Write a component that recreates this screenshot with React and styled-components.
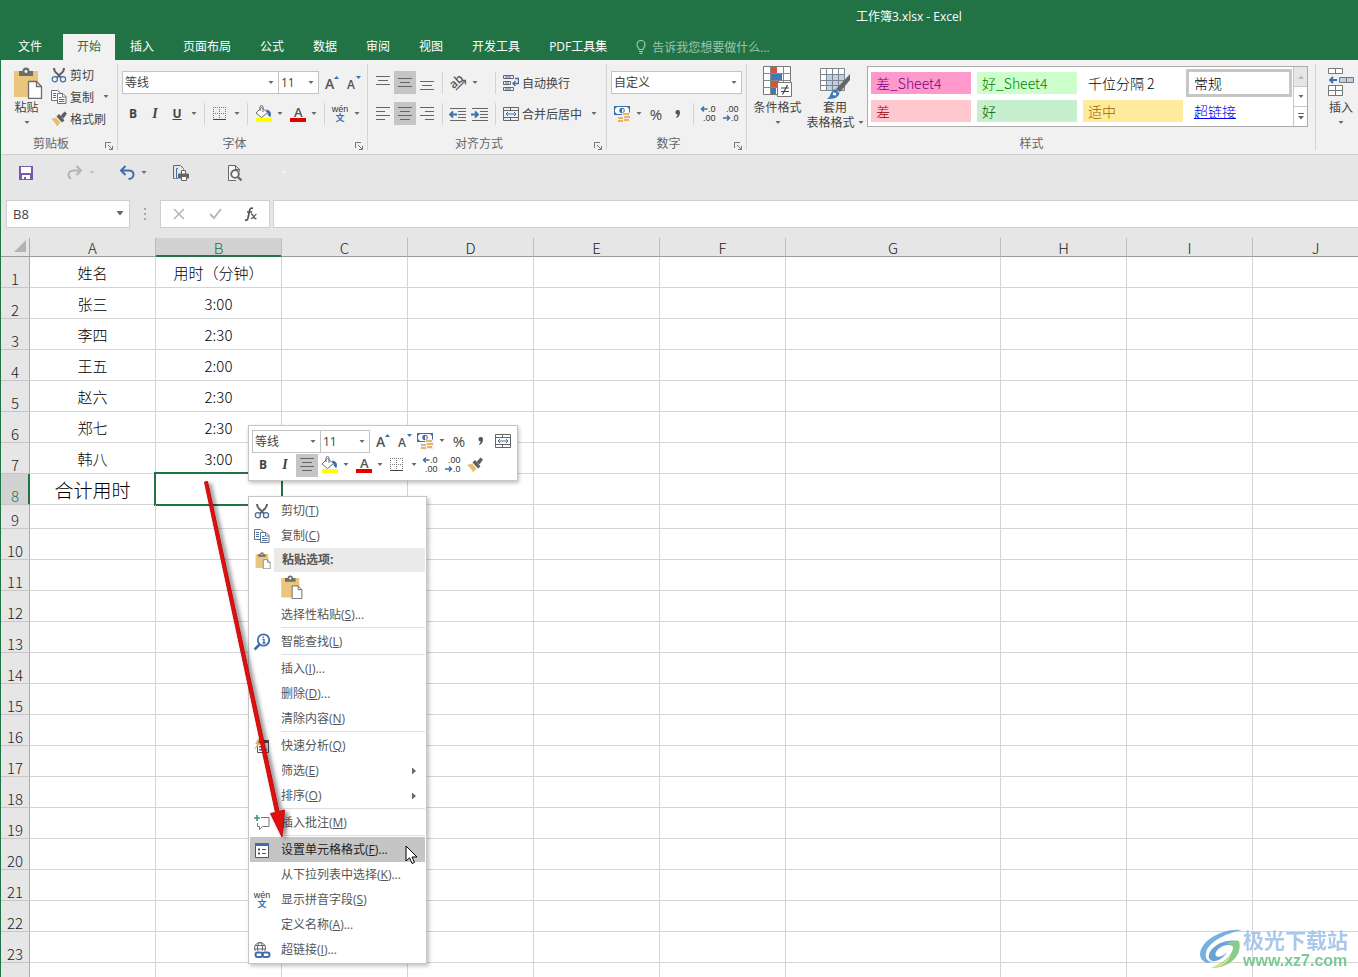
import React from "react";
import styled, { createGlobalStyle, css } from "styled-components";

const GlobalStyle = createGlobalStyle`
  *,
  *::before,
  *::after {
    box-sizing: border-box;
  }

  body {
    margin: 0;
    background: #fff;
    font-family: "Open Sans", "Noto Sans CJK SC", sans-serif;
    font-size: 12px;
    color: #444;
  }

  button,
  input,
  select {
    font: inherit;
    color: inherit;
    margin: 0;
    padding: 0;
    border: none;
    outline: none;
    background: none;
    border-radius: 0;
  }

  svg {
    display: block;
    flex: none;
  }
`;

const tabs = ["插入", "页面布局", "公式", "数据", "审阅", "视图", "开发工具", "PDF工具集"];

const cellStyles = [
  { name: "差_Sheet4", bg: "#ff99cc", color: "#800080" },
  { name: "好_Sheet4", bg: "#ccffcc", color: "#008000" },
  { name: "千位分隔 2", bg: "#ffffff", color: "#000000" },
  { name: "常规", bg: "#ffffff", color: "#000000", selected: true },
  { name: "差", bg: "#ffc7ce", color: "#9c0006" },
  { name: "好", bg: "#c6efce", color: "#006100" },
  { name: "适中", bg: "#ffeb9c", color: "#9c6500" },
  { name: "超链接", bg: "#ffffff", color: "#0000ff", link: true },
];

const columns = [
  { name: "A", width: 126 },
  { name: "B", width: 126 },
  { name: "C", width: 126 },
  { name: "D", width: 126 },
  { name: "E", width: 126 },
  { name: "F", width: 126 },
  { name: "G", width: 215 },
  { name: "H", width: 126 },
  { name: "I", width: 126 },
  { name: "J" },
];

const data = {
  1: ["姓名", "用时（分钟）"],
  2: ["张三", "3:00"],
  3: ["李四", "2:30"],
  4: ["王五", "2:00"],
  5: ["赵六", "2:30"],
  6: ["郑七", "2:30"],
  7: ["韩八", "3:00"],
  8: ["合计用时", ""],
};

const rows = Array.from({ length: 24 }, (_, i) => i + 1);

/* ---------- icons ---------- */

const Caret = ({ color = "#6a6a6a" }) => (
  <svg width="6" height="4" viewBox="0 0 6 4">
    <path d="M.500 0h5L3 3z" fill={color} />
  </svg>
);

const ClipboardIcon = ({ size = 32 }) => (
  <svg width={size} height={size} viewBox="0 0 32 32">
    <path d="M3 4h24v26H3z" fill="#ecc57c" />
    <path d="M8 4h3.500a3.500 3.500 0 0 1 7 0H22v5H8z" fill="#6d6d6d" />
    <circle cx="15" cy="4.500" r="1.400" fill="#fff" />
    <path d="M17.500 14.500h8l5 5v12h-13z" fill="#fff" stroke="#6d6d6d" strokeWidth="1.300" />
    <path d="M25.500 14.500v5h5" fill="none" stroke="#6d6d6d" strokeWidth="1.300" />
  </svg>
);

const CutIcon = () => (
  <svg width="16" height="16" viewBox="0 0 16 16">
    <path d="M3 1c0 3 1 4 3 5.500L10.500 11M13 1c0 3-1 4-3 5.500L5.500 11" fill="none" stroke="#5f5f5f" strokeWidth="2" />
    <circle cx="3.800" cy="12.300" r="2.600" fill="#f1f1f1" stroke="#3f6fa9" strokeWidth="1.200" />
    <circle cx="12" cy="12.300" r="2.600" fill="#f1f1f1" stroke="#3f6fa9" strokeWidth="1.200" />
  </svg>
);

const CopyIcon = () => (
  <svg width="16" height="16" viewBox="0 0 16 16" fill="#fff" stroke="#6a7380">
    <path d="M.5 1.500h6l2.500 2v8H.5z" />
    <path d="M2 4.500h3M2 6.500h3M2 8.500h3" stroke="#3f6fa9" />
    <path d="M6.500 4.500h5.500l3 3v7H6.500z" />
    <path d="M11.500 4.500v3.500h3.500" fill="none" />
    <path d="M8 8.500h2.500M8 10.500h5.500M8 12.500h5.500" stroke="#3f6fa9" />
  </svg>
);

const BrushIcon = () => (
  <svg width="16" height="16" viewBox="0 0 16 16">
    <path d="M0 8l5-1.500 4.500 5L6 15.500C4.500 12.500 3 10 0 8z" fill="#e8bd75" />
    <path d="M5.500 5.500L8 3l5.500 6.500-2.500 2z" fill="#5f5f5f" />
    <path d="M9.500 5L13.500.500 16 2.500l-3.500 5z" fill="#5f5f5f" />
  </svg>
);

const GrowIcon = ({ shrink }) => (
  <svg width="22" height="22" viewBox="0 0 22 22">
    <text x="6" y="17" fontSize={shrink ? 12 : 14} fontWeight="600" fill="#555">
      A
    </text>
    <path d={shrink ? "M15 4h5l-2.500 3z" : "M15 7h5l-2.500-3z"} fill="#3f6fa9" />
  </svg>
);

const BordersIcon = () => (
  <svg width="14" height="14" viewBox="0 0 14 14" fill="none" stroke="#777">
    <path
      d="M0 .5h13M0 6.500h13M.5 0v12M6.500 0v12M12.500 0v12"
      strokeDasharray="1 1"
    />
    <path d="M0 12.500h13" stroke="#444" />
  </svg>
);

const FillIcon = () => (
  <svg width="22" height="22" viewBox="0 0 22 22">
    <path d="M9.500 4.500l6 5-6 5-5.500-4.500z" fill="#fff" stroke="#6d6d6d" />
    <path d="M8 8V4a1.500 1.500 0 0 1 3 0v5" fill="none" stroke="#6d6d6d" />
    <path d="M14 6.500c4 .5 6 3 4.500 7.500-1.500-.5-3-2-3-4z" fill="#3f6fa9" />
    <path d="M4 15h16v4H4z" fill="#ffff00" />
  </svg>
);

const FontColorIcon = () => (
  <svg width="22" height="22" viewBox="0 0 22 22">
    <text x="8" y="14" fontSize="13" fontWeight="600" fill="#555">
      A
    </text>
    <path d="M4 15h16v4H4z" fill="#e30000" />
  </svg>
);

const PinyinIcon = () => (
  <svg width="22" height="22" viewBox="0 0 22 22">
    <text x="11" y="9" fontSize="9" fontFamily="Liberation Sans" textAnchor="middle" fill="#333">
      wén
    </text>
    <text x="11" y="18" fontSize="9" fontWeight="700" textAnchor="middle" fill="#3f6fa9">
      文
    </text>
  </svg>
);

const linePaths = {
  top: "M1 2.500h14M3 6.500h10M1 10.500h14",
  middle: "M1 4.500h14M3 8.500h10M1 12.500h14",
  bottom: "M1 7.500h14M3 11.500h10M1 15.500h14",
  left: "M1 2.500h14M1 6.500h9M1 10.500h14M1 14.500h9",
  center: "M1 2.500h14M3 6.500h10M1 10.500h14M3 14.500h10",
  right: "M1 2.500h14M6 6.500h9M1 10.500h14M6 14.500h9",
};

const LinesIcon = ({ kind }) => (
  <svg width="16" height="18" viewBox="0 0 16 18">
    <path d={linePaths[kind]} stroke="#666" />
  </svg>
);

const OrientationIcon = () => (
  <svg width="22" height="22" viewBox="0 0 22 22">
    <text x="3" y="14" fontSize="12" fontWeight="600" fill="#555" transform="rotate(-42 9 11)">
      ab
    </text>
    <path d="M9 18l9-9M14.500 8.500h4V12.500" fill="none" stroke="#666" strokeWidth="1.300" />
  </svg>
);

const IndentIcon = ({ increase }) => (
  <svg width="18" height="14" viewBox="0 0 18 14">
    <path d="M1 1.500h16M9 4.500h8M9 7.500h8M9 10.500h8M1 13.500h16" stroke="#666" />
    <path
      d={increase ? "M0 7.500h6M4 4.500l3 3-3 3" : "M8 7.500H2M4 4.500l-3 3 3 3"}
      fill="none"
      stroke="#3f6fa9"
      strokeWidth="1.800"
    />
  </svg>
);

const WrapIcon = () => (
  <svg width="16" height="16" viewBox="0 0 16 16" fill="none" stroke="#666">
    <path d="M.5.500h10v3H.5zM.5 6.500h7v3h-7zM.5 12.500h10v3H.5z" />
    <path d="M2 2h6M2 8h4M2 14h6" stroke="#3f6fa9" />
    <path d="M12 3.500h3.500v5H10M12.500 6L10 8.500l2.500 2.500" stroke="#3f6fa9" strokeWidth="1.400" />
  </svg>
);

const MergeIcon = () => (
  <svg width="16" height="16" viewBox="0 0 16 16" fill="none" stroke="#666">
    <path d="M.5 1.500h15v13H.5zM.5 4.500h15M.5 11.500h15M7.500 1.500v3M7.500 11.500v3" />
    <path d="M3 8h10M5 6L3 8l2 2M11 6l2 2-2 2" stroke="#3f6fa9" />
  </svg>
);

const MoneyIcon = () => (
  <svg width="18" height="18" viewBox="0 0 18 18">
    <path d="M1.500 1.500h15v8h-15z" fill="#fff" stroke="#3f6fa9" />
    <path d="M1 1h4l-4 4zM17 1h-4l4 4zM1 10h4L1 6z" fill="#3f6fa9" />
    <circle cx="9" cy="5.500" r="2.700" fill="#3f6fa9" />
    <path d="M9 4h1.500v3H9z" fill="#fff" />
    <path d="M9 7.500h9v10H4v-6h5z" fill="#f1f1f1" />
    <path d="M10 8h6v2h-6zM11 11h6v2h-6zM5 12h5v2H5zM5 15h5v2H5zM11 14h5v2h-5z" fill="#e8b468" />
  </svg>
);

const DecimalIcon = ({ decrease }) => (
  <svg width="22" height="22" viewBox="0 0 22 22" fontSize="9" fontFamily="Liberation Sans" fill="#333">
    <text x={decrease ? 6 : 10} y="9">
      {decrease ? ".00" : ".0"}
    </text>
    <text x={decrease ? 11 : 5} y="18">
      {decrease ? ".0" : ".00"}
    </text>
    <path
      d={decrease ? "M3 15h6M7 12.500L9.500 15 7 17.500" : "M9.500 6h-6M6 3.500L3.500 6 6 8.500"}
      fill="none"
      stroke="#3f6fa9"
      strokeWidth="1.500"
    />
  </svg>
);

const ConditionalIcon = () => (
  <svg width="30" height="34" viewBox="0 0 30 34">
    <path d="M.5.500h27v28H.5z" fill="#fff" stroke="#777" />
    <path d="M8 1h6v6H8zM8 14h8v7H8z" fill="#d2553a" />
    <path d="M8 7h11v7H8zM8 21h5v7H8z" fill="#3f7ab8" />
    <path d="M7.500.500v28M20.500.500v28M.5 7.500h27M.5 14.500h27M.5 21.500h27" stroke="#888" fill="none" />
    <path d="M14.500 16.500h14v14h-14z" fill="#fff" stroke="#777" />
    <path d="M18 22h8M18 25.500h8M24.500 19l-5 9.500" stroke="#444" strokeWidth="1.200" />
  </svg>
);

const TableFormatIcon = () => (
  <svg width="32" height="34" viewBox="0 0 32 34">
    <path d="M1.500 2.500h24v22h-24z" fill="#fff" />
    <path d="M8 9h18v16H8z" fill="#bcd0e6" />
    <path
      d="M1.500 2.500h24v22h-24zM1.500 8.500h24M1.500 14.500h24M1.500 19.500h24M7.500 2.500v22M13.500 2.500v22M19.500 2.500v22"
      fill="none"
      stroke="#7d848c"
    />
    <path d="M31 8v6L21 26l-4-3z" fill="#666" />
    <path d="M16 23l4.500 4c-1 5-6 6-12.500 6 4-2 3-8 8-10z" fill="#3f7ab8" />
    <path d="M14 27.500l3 1" stroke="#fff" strokeWidth="2.500" />
  </svg>
);

const InsertCellsIcon = () => (
  <svg width="26" height="32" viewBox="0 0 26 32" fill="#fff" stroke="#777">
    <path d="M.5 1.500h14v5H.5zM7.500 1.500v5" />
    <path d="M.5 18.500h14v10H.5zM7.500 18.500v10M.5 23.500h14" />
    <path d="M11.500 10.500h14v5h-14zM18.500 10.500v5" fill="#bcd0e6" />
    <path d="M9 13H2M5 10l-3 3 3 3" fill="none" stroke="#3f6fa9" strokeWidth="1.800" />
  </svg>
);

const LauncherIcon = () => (
  <svg width="8" height="8" viewBox="0 0 8 8" fill="none" stroke="#777">
    <path d="M.5 6V.5H6M3 3l4 4M7.500 4v3.500H4" />
  </svg>
);

const BulbIcon = () => (
  <svg width="10" height="14" viewBox="0 0 10 14" fill="none" stroke="#9dc5ad" strokeWidth="1.200">
    <path d="M3 9.500C3 8 1 7 1 4.500a4 4 0 0 1 8 0C9 7 7 8 7 9.500zM3 11.500h4M3.500 13.300h3" />
  </svg>
);

const SaveIcon = () => (
  <svg width="14" height="14" viewBox="0 0 14 14">
    <path d="M0 0h14v14H0z" fill="#7c58a8" />
    <path d="M2 1h10v6H2zM3 9h8v4H3z" fill="#fff" />
    <path d="M5 11h2v2H5z" fill="#7c58a8" />
  </svg>
);

const UndoIcon = ({ redo }) => (
  <svg width="16" height="16" viewBox="0 0 16 16">
    <path
      d={
        redo
          ? "M9.500 1l4.500 4.500L9.500 10M14 5.500H6.500C3 5.500 1.500 8 1.500 10s1 3 2.500 3.500"
          : "M6.500 1L2 5.500 6.500 10M2 5.500H9.500c3.500 0 5 2 5 4s-1.500 4.500-5 4.500"
      }
      fill="none"
      stroke={redo ? "#b4b4b4" : "#3f6fa9"}
      strokeWidth="2"
    />
  </svg>
);

const QuickPrintIcon = () => (
  <svg width="18" height="18" viewBox="0 0 18 18" fill="none" stroke="#666">
    <path d="M3.500 14.500h-2v-13h7l3 3v1" />
    <path d="M6 4.500H4.500v10H6" stroke="#3f6fa9" />
    <path d="M9.500 10V6.500h4V10" fill="#fff" />
    <path d="M6.500 10h10v4h-10z" fill="#666" />
    <path d="M9.500 12.500h5v4h-5z" fill="#fff" />
  </svg>
);

const PreviewIcon = () => (
  <svg width="16" height="18" viewBox="0 0 16 18" fill="none" stroke="#666">
    <path d="M9 16.500H1.500v-15h7l4 4v2M8.500 1.500v4h4" fill="#f7f7f7" />
    <circle cx="8" cy="10" r="3.800" fill="#f7f7f7" strokeWidth="1.800" />
    <path d="M11 13l3.500 3.500" strokeWidth="2.200" />
  </svg>
);

const LookupIcon = () => (
  <svg width="18" height="18" viewBox="0 0 18 18" fill="none" stroke="#3f6fa9">
    <circle cx="10.500" cy="7" r="5.700" strokeWidth="1.800" />
    <path d="M6.500 11.500L1.500 16.500" strokeWidth="2.600" />
    <path d="M9.500 6.500h1.500V10M9.500 10h3M10.300 3.500v1.500" strokeWidth="1.300" />
  </svg>
);

const QuickAnalysisIcon = () => (
  <svg width="16" height="16" viewBox="0 0 16 16">
    <path d="M3.500 3.500h11v11h-11z" fill="#fff" stroke="#555" />
    <path d="M3 2h12v3H3z" fill="#555" />
    <path d="M5 8h6v1.500H5zM5 11h8v1.500H5z" fill="#3f6fa9" />
    <path d="M5 0L1 6h2L0 12l7-7H4l3-5z" fill="#e8b468" />
  </svg>
);

const CommentIcon = () => (
  <svg width="16" height="16" viewBox="0 0 16 16" fill="none">
    <path d="M7 2.500h8v9H8.500L5.500 14.500v-3h-2V8" stroke="#777" />
    <path d="M3 0v6M0 3h6" stroke="#3f9a6b" strokeWidth="1.600" />
  </svg>
);

const FormatCellsIcon = () => (
  <svg width="16" height="16" viewBox="0 0 16 16">
    <path d="M1.500 1.500h13v14h-13z" fill="#fff" stroke="#555" />
    <path d="M1 1h14v3H1z" fill="#3f6fa9" />
    <path d="M8 7.500h4M8 11.500h4" stroke="#555" />
    <path d="M4 6.500h2v2H4zM4 10.500h2v2H4z" fill="#555" />
  </svg>
);

const LinkIcon = () => (
  <svg width="18" height="18" viewBox="0 0 18 18" fill="none">
    <circle cx="7" cy="7" r="5.500" stroke="#666" />
    <ellipse cx="7" cy="7" rx="2.500" ry="5.500" stroke="#666" />
    <path d="M2 4.500h10M1.500 8h11" stroke="#666" />
    <path d="M2 10h16v8H2z" fill="#fff" />
    <rect x="2.500" y="11.500" width="7" height="4.500" rx="2.200" stroke="#3f6fa9" strokeWidth="2" />
    <rect x="9.500" y="11.500" width="7" height="4.500" rx="2.200" stroke="#3f6fa9" strokeWidth="2" />
  </svg>
);

const CommaIcon = () => (
  <svg width="6" height="8" viewBox="0 0 6 8">
    <path d="M3 0a2 2 0 0 1 2 2c0 3-1 5-3.500 6L1 7c1-.5 1.500-1.500 1.500-2.500A2 2 0 0 1 3 0z" fill="#555" />
  </svg>
);

const FunctionIcon = () => (
  <svg width="14" height="14" viewBox="0 0 14 14" fill="none" stroke="#555">
    <path d="M9 1.500C7 .5 6 1.500 5.500 4L4 11c-.5 2-1.500 2.500-3 2M3 5h5" strokeWidth="1.700" />
    <path d="M7 7c1.500 0 2 1 2.500 2.500S11 12 12.500 11.500M12.500 7.500C11 7 9 12 7 11.500" strokeWidth="1.300" />
  </svg>
);

/* ---------- window ---------- */

const Window = styled.div`
  position: relative;
  display: flex;
  flex-direction: column;
  height: 100vh;
  overflow: hidden;
  border-left: 1px solid #217346;
  background: #e6e6e6;
`;

const TitleBar = styled.header`
  flex: none;
  height: 34px;
  padding-left: 63%;
  background: #217346;
  color: #fff;
  line-height: 34px;
`;

const TabBar = styled.nav`
  flex: none;
  display: flex;
  gap: 1px;
  height: 26px;
  background: #217346;
  color: #fff;
`;

const Tab = styled.button`
  flex: none;
  padding: 0 14px;
  line-height: 22px;
  white-space: nowrap;

  ${(p) =>
    p.$file &&
    css`
      width: 58px;
      margin-right: 3px;
    `}

  ${(p) =>
    p.$active &&
    css`
      background: #f1f1f1;
      color: #217346;
    `}
`;

const TellMe = styled.label`
  display: flex;
  align-items: center;
  gap: 6px;
  margin-left: 14px;

  input {
    width: 140px;
    color: #9dc5ad;
  }

  input::placeholder {
    color: #9dc5ad;
    opacity: 1;
  }
`;

/* ---------- ribbon ---------- */

const Ribbon = styled.div`
  flex: none;
  display: flex;
  height: 95px;
  overflow: hidden;
  background: #f1f1f1;
  border-bottom: 1px solid #d0d0d0;
`;

const Group = styled.section`
  position: relative;
  flex: none;
  display: flex;
  flex-direction: column;
  width: ${(p) => p.$width}px;

  &::after {
    content: "";
    position: absolute;
    top: 4px;
    right: 0;
    bottom: 4px;
    width: 1px;
    background: #d4d4d4;
  }
`;

const GroupBody = styled.div`
  flex: 1;
  display: flex;
  padding-left: 4px;
`;

const GroupFooter = styled.div`
  display: flex;
  align-items: center;
  height: 21px;
  color: #666;
  line-height: 18px;
  text-align: center;

  span {
    flex: 1;
  }

  button {
    width: 17px;
    padding: 5px 0 0 4px;
  }
`;

const Lines = styled.div`
  flex: 1;
  display: flex;
  flex-direction: column;
  gap: 8px;
  padding-top: 11px;
`;

const Line = styled.div`
  display: flex;
  align-items: center;
  height: ${(p) => p.$height || 23}px;
`;

const ToolButton = styled.button`
  flex: none;
  display: flex;
  align-items: center;
  justify-content: center;
  width: 22px;
  height: 23px;
  background: ${(p) => (p.$on ? "#c5c5c5" : "none")};
`;

const CaretButton = styled(ToolButton)`
  width: 12px;
`;

const Glyph = styled.span`
  font-size: ${(p) => p.$size || 12}px;
  font-weight: ${(p) => p.$weight || 700};
  font-family: ${(p) => (p.$serif ? '"Liberation Serif", serif' : "inherit")};
  font-style: ${(p) => (p.$italic ? "italic" : "normal")};
  text-decoration: ${(p) => (p.$underline ? "underline" : "none")};
  line-height: 18px;
  color: #444;
`;

const Separator = styled.i`
  flex: none;
  width: 1px;
  height: 22px;
  margin: 0 4px;
  background: #d4d4d4;
`;

const IndentCell = styled.div`
  display: flex;
  width: 44px;
`;

const TextButton = styled.button`
  display: flex;
  align-items: center;
  gap: 3px;
  height: 22px;
  padding: 0 6px 0 3px;
  white-space: nowrap;
`;

const SmallButtons = styled.div`
  padding-top: 4px;
`;

const BigButton = styled.button`
  flex: none;
  display: flex;
  flex-direction: column;
  align-items: center;
  width: ${(p) => p.$width}px;
  padding-top: 6px;
  line-height: 15px;
  white-space: nowrap;
`;

const BigIcon = styled.span`
  display: flex;
  align-items: center;
  height: 34px;
`;

const BigCaret = styled.span`
  display: flex;
  align-items: center;
  gap: 3px;
  height: 15px;
`;

const SelectBox = styled.div`
  position: relative;
  flex: none;
  width: ${(p) => p.$width}px;
  height: 23px;
  border: 1px solid #c3c3c3;
  background: #fff;

  & + & {
    margin-left: -1px;
  }

  select {
    appearance: none;
    width: 100%;
    height: 21px;
    padding-left: 2px;
  }

  svg {
    position: absolute;
    top: 9px;
    right: 4px;
    pointer-events: none;
  }
`;

const Gallery = styled.div`
  display: flex;
  width: 441px;
  height: 61px;
  margin: 6px 0 0 1px;
  border: 1px solid #ababab;
  background: #fff;
`;

const GalleryGrid = styled.div`
  flex: 1;
  display: grid;
  grid-template-columns: repeat(4, 1fr);
  grid-auto-rows: 22px;
  gap: 6px;
  padding: 5px 4px 0 3px;
`;

const StyleCell = styled.button`
  padding-left: 5px;
  font-family: "Noto Sans CJK SC", sans-serif;
  font-size: 14px;
  font-weight: 300;
  line-height: 20px;
  text-align: left;
  text-decoration: ${(p) => (p.$link ? "underline" : "none")};
  color: ${(p) => p.$color};
  background: ${(p) => p.$bg};
  outline: ${(p) => (p.$selected ? "3px solid #c6c6c6" : "none")};
`;

const GalleryScroll = styled.div`
  display: flex;
  flex-direction: column;
  width: 14px;
  border-left: 1px solid #c6c6c6;

  button {
    flex: 1;
    display: flex;
    flex-direction: column;
    gap: 2px;
    align-items: center;
    justify-content: center;
  }

  button + button {
    border-top: 1px solid #c6c6c6;
  }

  button:first-child {
    background: #e6e6e6;
  }
`;

/* ---------- quick access and formula bar ---------- */

const QuickAccess = styled.div`
  flex: none;
  display: flex;
  align-items: center;
  height: 35px;
  padding-left: 14px;
`;

const QuickItem = styled.div`
  display: flex;
  width: ${(p) => p.$width}px;
`;

const FormulaBar = styled.div`
  flex: none;
  display: flex;
  align-items: stretch;
  height: 28px;
  margin: 10px 0;
  padding-left: 5px;
`;

const NameBox = styled.label`
  position: relative;
  width: 124px;
  background: #fff;
  border: 1px solid #cfcfcf;

  input {
    width: 100px;
    height: 26px;
    padding-left: 6px;
    font-size: 13px;
  }

  svg {
    position: absolute;
    top: 10px;
    right: 5px;
  }
`;

const Dots = styled.span`
  display: flex;
  flex-direction: column;
  align-items: center;
  justify-content: center;
  gap: 3px;
  width: 30px;

  i {
    width: 2px;
    height: 2px;
    background: #aaa;
  }
`;

const FormulaButtons = styled.div`
  display: flex;
  width: 110px;
  margin-right: 3px;
  background: #fff;
  border: 1px solid #cfcfcf;

  button {
    flex: 1;
    display: flex;
    align-items: center;
    justify-content: center;
  }
`;

const FormulaInput = styled.input`
  && {
    flex: 1;
    background: #fff;
    border: 1px solid #cfcfcf;
    border-right: none;
  }
`;

/* ---------- sheet ---------- */

const SheetArea = styled.main`
  flex: 1;
  min-height: 0;
  overflow: hidden;
  background: #fff;
`;

const Sheet = styled.table`
  table-layout: fixed;
  width: 100%;
  min-width: 1378px;
  border-collapse: separate;
  border-spacing: 0;
  font-family: "Noto Sans CJK SC", sans-serif;
  font-size: 15px;
  font-weight: 300;
  color: #000;
`;

const ColHead = styled.th`
  height: 19px;
  padding: 2px 0 0;
  font-weight: 300;
  line-height: 16px;
  background: ${(p) => (p.$active ? "#d2d2d2" : "#e6e6e6")};
  color: ${(p) => (p.$active ? "#217346" : "#222")};
  border-right: 1px solid #bdbdbd;
  border-bottom: 1px solid ${(p) => (p.$active ? "#217346" : "#9b9b9b")};
  box-shadow: ${(p) => (p.$active ? "inset 0 -1px #217346" : "none")};
`;

const Corner = styled.td`
  padding: 0 3px 2px 0;
  background: #e6e6e6;
  border-right: 1px solid #ababab;
  border-bottom: 1px solid #9b9b9b;

  svg {
    margin-left: auto;
  }
`;

const RowHead = styled.th`
  padding: 0;
  font-weight: 300;
  line-height: 16px;
  vertical-align: bottom;
  background: ${(p) => (p.$active ? "#d2d2d2" : "#e6e6e6")};
  color: ${(p) => (p.$active ? "#217346" : "#222")};
  border-right: 1px solid ${(p) => (p.$active ? "#217346" : "#ababab")};
  border-bottom: 1px solid #c6c6c6;
  box-shadow: ${(p) => (p.$active ? "inset -1px 0 #217346" : "none")};
`;

const Row = styled.tr`
  height: ${(p) => p.$height}px;
`;

const Cell = styled.td`
  position: relative;
  padding: 2px 0 0;
  line-height: 20px;
  font-size: ${(p) => (p.$large ? 19 : 15)}px;
  text-align: center;
  white-space: nowrap;
  border-right: 1px solid #d4d4d4;
  border-bottom: 1px solid #d4d4d4;

  ${(p) =>
    p.$selected &&
    css`
      &::after {
        content: "";
        position: absolute;
        inset: -2px;
        border: 2px solid #217346;
      }
    `}
`;

/* ---------- floating parts ---------- */

const MiniToolbar = styled.div`
  position: absolute;
  top: 425px;
  left: 247px;
  width: 270px;
  height: 56px;
  padding: 3px;
  background: #fff;
  border: 1px solid #c6c6c6;
  box-shadow: 1px 2px 4px rgba(0, 0, 0, 0.25);
`;

const ContextMenu = styled.div`
  position: absolute;
  top: 496px;
  left: 247px;
  width: 179px;
  padding: 1px;
  background: #fff;
  border: 1px solid #c6c6c6;
  box-shadow: 2px 2px 4px rgba(0, 0, 0, 0.25);

  hr {
    height: 1px;
    margin: 0 0 1px 31px;
    border: none;
    background: #dadfe4;
  }
`;

const MenuItem = styled.button`
  display: flex;
  align-items: center;
  width: 100%;
  height: 25px;
  padding-right: 8px;
  color: ${(p) => (p.$active ? "#222" : "#555")};
  background: ${(p) => (p.$active ? "#c5c5c5" : "none")};
`;

const MenuIcon = styled.span`
  display: flex;
  justify-content: center;
  width: 24px;
`;

const MenuText = styled.span`
  flex: 1;
  padding: 0 0 2px 7px;
  text-align: left;
  white-space: nowrap;
`;

const MenuHeading = styled.div`
  display: flex;
  align-items: center;
  height: 24px;

  strong {
    flex: 1;
    padding-left: 8px;
    line-height: 24px;
    color: #555;
    background: #eaeaea;
  }
`;

const PasteChoice = styled.button`
  display: block;
  height: 30px;
  padding-left: 29px;
`;

const ArrowLayer = styled.svg`
  position: absolute;
  top: 470px;
  left: 189px;
  pointer-events: none;
  filter: drop-shadow(3px 2px 2px rgba(0, 0, 0, 0.5));
`;

const Pointer = styled.svg`
  position: absolute;
  top: 845px;
  left: 404px;
  pointer-events: none;
`;

const Watermark = styled.div`
  position: absolute;
  right: 10px;
  bottom: 6px;
  display: flex;
  align-items: center;
  opacity: 0.85;
  pointer-events: none;

  strong {
    display: block;
    font-family: "Noto Sans CJK SC", sans-serif;
    font-size: 21px;
    font-weight: 700;
    line-height: 24px;
    color: #9dbfe8;
  }

  span {
    display: block;
    font-family: "Liberation Sans", sans-serif;
    font-size: 16px;
    font-weight: 700;
    line-height: 20px;
    color: #63c384;
  }
`;

const menu = [
  { label: "剪切", hot: "T", icon: <CutIcon /> },
  { label: "复制", hot: "C", icon: <CopyIcon /> },
  { heading: "粘贴选项:" },
  { label: "选择性粘贴", hot: "S", more: true },
  { line: true },
  { label: "智能查找", hot: "L", icon: <LookupIcon /> },
  { line: true },
  { label: "插入", hot: "I", more: true },
  { label: "删除", hot: "D", more: true },
  { label: "清除内容", hot: "N" },
  { line: true },
  { label: "快速分析", hot: "Q", icon: <QuickAnalysisIcon /> },
  { label: "筛选", hot: "E", sub: true },
  { label: "排序", hot: "O", sub: true },
  { line: true },
  { label: "插入批注", hot: "M", icon: <CommentIcon /> },
  { line: true },
  { label: "设置单元格格式", hot: "F", more: true, icon: <FormatCellsIcon />, active: true },
  { label: "从下拉列表中选择", hot: "K", more: true },
  { label: "显示拼音字段", hot: "S", icon: <PinyinIcon /> },
  { label: "定义名称", hot: "A", more: true },
  { label: "超链接", hot: "I", more: true, icon: <LinkIcon /> },
];

function Select({ width, value, label }) {
  return (
    <SelectBox $width={width}>
      <select aria-label={label} defaultValue={value}>
        <option>{value}</option>
      </select>
      <Caret />
    </SelectBox>
  );
}

function Tool({ label, on, children }) {
  return (
    <ToolButton aria-label={label} $on={on}>
      {children}
    </ToolButton>
  );
}

function More({ label }) {
  return (
    <CaretButton aria-label={label}>
      <Caret />
    </CaretButton>
  );
}

function RibbonGroup({ title, width, launcher, children }) {
  return (
    <Group $width={width}>
      <GroupBody>{children}</GroupBody>
      <GroupFooter>
        <span>{title}</span>
        {launcher && (
          <button aria-label={title}>
            <LauncherIcon />
          </button>
        )}
      </GroupFooter>
    </Group>
  );
}

function ClipboardGroup() {
  return (
    <RibbonGroup title="剪贴板" width={117} launcher>
      <BigButton $width={43}>
        <BigIcon>
          <ClipboardIcon />
        </BigIcon>
        粘贴
        <BigCaret>
          <Caret />
        </BigCaret>
      </BigButton>
      <SmallButtons>
        <TextButton>
          <CutIcon />
          剪切
        </TextButton>
        <Line $height={22}>
          <TextButton>
            <CopyIcon />
            复制
          </TextButton>
          <More label="复制选项" />
        </Line>
        <TextButton>
          <BrushIcon />
          格式刷
        </TextButton>
      </SmallButtons>
    </RibbonGroup>
  );
}

function FontGroup() {
  return (
    <RibbonGroup title="字体" width={250} launcher>
      <Lines>
        <Line>
          <Select label="字体" width={157} value="等线" />
          <Select label="字号" width={41} value="11" />
          <Tool label="增大字号">
            <GrowIcon />
          </Tool>
          <Tool label="减小字号">
            <GrowIcon shrink />
          </Tool>
        </Line>
        <Line>
          <Tool label="加粗">
            <Glyph>B</Glyph>
          </Tool>
          <Tool label="倾斜">
            <Glyph $serif $italic $size={14}>I</Glyph>
          </Tool>
          <Tool label="下划线">
            <Glyph $underline>U</Glyph>
          </Tool>
          <More label="下划线选项" />
          <Separator />
          <Tool label="边框">
            <BordersIcon />
          </Tool>
          <More label="边框选项" />
          <Separator />
          <Tool label="填充颜色">
            <FillIcon />
          </Tool>
          <More label="填充颜色选项" />
          <Tool label="字体颜色">
            <FontColorIcon />
          </Tool>
          <More label="字体颜色选项" />
          <Separator />
          <Tool label="拼音">
            <PinyinIcon />
          </Tool>
          <More label="拼音选项" />
        </Line>
      </Lines>
    </RibbonGroup>
  );
}

function AlignGroup() {
  return (
    <RibbonGroup title="对齐方式" width={239} launcher>
      <Lines>
        <Line>
          <Tool label="顶端对齐">
            <LinesIcon kind="top" />
          </Tool>
          <Tool label="垂直居中" on>
            <LinesIcon kind="middle" />
          </Tool>
          <Tool label="底端对齐">
            <LinesIcon kind="bottom" />
          </Tool>
          <Separator />
          <IndentCell>
            <Tool label="方向">
              <OrientationIcon />
            </Tool>
            <More label="方向选项" />
          </IndentCell>
          <Separator />
          <TextButton>
            <WrapIcon />
            自动换行
          </TextButton>
        </Line>
        <Line>
          <Tool label="左对齐">
            <LinesIcon kind="left" />
          </Tool>
          <Tool label="居中" on>
            <LinesIcon kind="center" />
          </Tool>
          <Tool label="右对齐">
            <LinesIcon kind="right" />
          </Tool>
          <Separator />
          <IndentCell>
            <Tool label="减少缩进量">
              <IndentIcon />
            </Tool>
            <Tool label="增加缩进量">
              <IndentIcon increase />
            </Tool>
          </IndentCell>
          <Separator />
          <TextButton>
            <MergeIcon />
            合并后居中
          </TextButton>
          <More label="合并选项" />
        </Line>
      </Lines>
    </RibbonGroup>
  );
}

function NumberGroup() {
  return (
    <RibbonGroup title="数字" width={140} launcher>
      <Lines>
        <Line>
          <Select label="数字格式" width={131} value="自定义" />
        </Line>
        <Line>
          <Tool label="会计数字格式">
            <MoneyIcon />
          </Tool>
          <More label="货币选项" />
          <Tool label="百分比">
            <Glyph $size={15} $weight={400}>%</Glyph>
          </Tool>
          <Tool label="千位分隔">
            <CommaIcon />
          </Tool>
          <Separator />
          <Tool label="增加小数位数">
            <DecimalIcon />
          </Tool>
          <Tool label="减少小数位数">
            <DecimalIcon decrease />
          </Tool>
        </Line>
      </Lines>
    </RibbonGroup>
  );
}

function StylesGroup() {
  return (
    <RibbonGroup title="样式" width={569}>
      <BigButton $width={53}>
        <BigIcon>
          <ConditionalIcon />
        </BigIcon>
        条件格式
        <BigCaret>
          <Caret />
        </BigCaret>
      </BigButton>
      <BigButton $width={62}>
        <BigIcon>
          <TableFormatIcon />
        </BigIcon>
        套用
        <BigCaret>
          表格格式
          <Caret />
        </BigCaret>
      </BigButton>
      <Gallery>
        <GalleryGrid>
          {cellStyles.map((s) => (
            <StyleCell key={s.name} $bg={s.bg} $color={s.color} $link={s.link} $selected={s.selected}>
              {s.name}
            </StyleCell>
          ))}
        </GalleryGrid>
        <GalleryScroll>
          <button aria-label="上一行">
            <svg width="6" height="4" viewBox="0 0 6 4">
              <path d="M0 4h6L3 .5z" fill="#bbb" />
            </svg>
          </button>
          <button aria-label="下一行">
            <Caret />
          </button>
          <button aria-label="其他">
            <svg width="6" height="7" viewBox="0 0 6 7" fill="#666">
              <path d="M0 0h6v1H0zM0 3h6L3 6.500z" />
            </svg>
          </button>
        </GalleryScroll>
      </Gallery>
    </RibbonGroup>
  );
}

function QuickAccessBar() {
  return (
    <QuickAccess>
      <QuickItem $width={49}>
        <Tool label="保存">
          <SaveIcon />
        </Tool>
      </QuickItem>
      <QuickItem $width={52}>
        <Tool label="恢复">
          <UndoIcon redo />
        </Tool>
        <CaretButton aria-label="恢复选项">
          <Caret color="#c0c0c0" />
        </CaretButton>
      </QuickItem>
      <QuickItem $width={54}>
        <Tool label="撤消">
          <UndoIcon />
        </Tool>
        <More label="撤消选项" />
      </QuickItem>
      <QuickItem $width={54}>
        <Tool label="快速打印">
          <QuickPrintIcon />
        </Tool>
      </QuickItem>
      <QuickItem $width={54}>
        <Tool label="打印预览">
          <PreviewIcon />
        </Tool>
      </QuickItem>
      <CaretButton aria-label="自定义快速访问工具栏">
        <Caret color="#f4f4f4" />
      </CaretButton>
    </QuickAccess>
  );
}

function FormulaRow() {
  return (
    <FormulaBar>
      <NameBox>
        <input aria-label="名称框" defaultValue="B8" />
        <svg width="8" height="5" viewBox="0 0 8 5">
          <path d="M.500 0h7L4 4.500z" fill="#666" />
        </svg>
      </NameBox>
      <Dots>
        <i />
        <i />
        <i />
      </Dots>
      <FormulaButtons>
        <button aria-label="取消">
          <svg width="12" height="12" viewBox="0 0 12 12">
            <path d="M1 1l10 10M11 1L1 11" stroke="#b8b8b8" strokeWidth="1.600" />
          </svg>
        </button>
        <button aria-label="输入">
          <svg width="13" height="12" viewBox="0 0 13 12">
            <path d="M1 6l4 4 7-9" fill="none" stroke="#b8b8b8" strokeWidth="2" />
          </svg>
        </button>
        <button aria-label="插入函数">
          <FunctionIcon />
        </button>
      </FormulaButtons>
      <FormulaInput aria-label="编辑栏" />
    </FormulaBar>
  );
}

function SheetTable() {
  return (
    <SheetArea>
      <Sheet>
        <colgroup>
          <col width="29" />
          {columns.map((c) => (
            <col key={c.name} width={c.width} />
          ))}
        </colgroup>
        <thead>
          <tr>
            <Corner>
              <svg width="12" height="12" viewBox="0 0 12 12">
                <path d="M12 0v12H0z" fill="#b4b4b4" />
              </svg>
            </Corner>
            {columns.map((c) => (
              <ColHead key={c.name} scope="col" $active={c.name === "B"}>
                {c.name}
              </ColHead>
            ))}
          </tr>
        </thead>
        <tbody>
          {rows.map((r) => (
            <Row key={r} $height={r === 9 ? 24 : 31}>
              <RowHead scope="row" $active={r === 8}>
                {r}
              </RowHead>
              {columns.map((c, i) => (
                <Cell key={c.name} $large={r === 8 && i === 0} $selected={r === 8 && i === 1}>
                  {data[r]?.[i]}
                </Cell>
              ))}
            </Row>
          ))}
        </tbody>
      </Sheet>
    </SheetArea>
  );
}

function FloatingToolbar() {
  return (
    <MiniToolbar>
      <Line $height={24}>
        <Select label="浮动字体" width={69} value="等线" />
        <Select label="浮动字号" width={50} value="11" />
        <Tool label="增大字号">
          <GrowIcon />
        </Tool>
        <Tool label="减小字号">
          <GrowIcon shrink />
        </Tool>
        <Tool label="会计数字格式">
          <MoneyIcon />
        </Tool>
        <More label="货币选项" />
        <Tool label="百分比">
          <Glyph $size={15} $weight={400}>%</Glyph>
        </Tool>
        <Tool label="千位分隔">
          <CommaIcon />
        </Tool>
        <Tool label="合并后居中">
          <MergeIcon />
        </Tool>
      </Line>
      <Line $height={24}>
        <Tool label="加粗">
          <Glyph>B</Glyph>
        </Tool>
        <Tool label="倾斜">
          <Glyph $serif $italic $size={14}>I</Glyph>
        </Tool>
        <Tool label="居中" on>
          <LinesIcon kind="center" />
        </Tool>
        <Tool label="填充颜色">
          <FillIcon />
        </Tool>
        <More label="填充颜色选项" />
        <Tool label="字体颜色">
          <FontColorIcon />
        </Tool>
        <More label="字体颜色选项" />
        <Tool label="边框">
          <BordersIcon />
        </Tool>
        <More label="边框选项" />
        <Tool label="增加小数位数">
          <DecimalIcon />
        </Tool>
        <Tool label="减少小数位数">
          <DecimalIcon decrease />
        </Tool>
        <Tool label="格式刷">
          <BrushIcon />
        </Tool>
      </Line>
    </MiniToolbar>
  );
}

function CellMenu() {
  return (
    <ContextMenu role="menu">
      {menu.map((m, i) => {
        if (m.line) return <hr key={i} />;
        if (m.heading)
          return (
            <React.Fragment key={i}>
              <MenuHeading>
                <MenuIcon>
                  <ClipboardIcon size={17} />
                </MenuIcon>
                <strong>{m.heading}</strong>
              </MenuHeading>
              <PasteChoice aria-label="粘贴">
                <ClipboardIcon size={24} />
              </PasteChoice>
            </React.Fragment>
          );
        return (
          <MenuItem key={i} role="menuitem" $active={m.active}>
            <MenuIcon>{m.icon}</MenuIcon>
            <MenuText>
              {m.label}(<u>{m.hot}</u>){m.more && "..."}
            </MenuText>
            {m.sub && (
              <svg width="5" height="8" viewBox="0 0 5 8">
                <path d="M0 .500L4 4 0 7.500z" fill="#666" />
              </svg>
            )}
          </MenuItem>
        );
      })}
    </ContextMenu>
  );
}

export default function App() {
  return (
    <Window>
      <GlobalStyle />
      <TitleBar>工作簿3.xlsx - Excel</TitleBar>
      <TabBar>
        <Tab $file>文件</Tab>
        <Tab $active>开始</Tab>
        {tabs.map((t) => (
          <Tab key={t}>{t}</Tab>
        ))}
        <TellMe>
          <BulbIcon />
          <input aria-label="操作说明搜索" placeholder="告诉我您想要做什么..." />
        </TellMe>
      </TabBar>
      <Ribbon>
        <ClipboardGroup />
        <FontGroup />
        <AlignGroup />
        <NumberGroup />
        <StylesGroup />
        <BigButton $width={50}>
          <BigIcon>
            <InsertCellsIcon />
          </BigIcon>
          插入
          <BigCaret>
            <Caret />
          </BigCaret>
        </BigButton>
      </Ribbon>
      <QuickAccessBar />
      <FormulaRow />
      <SheetTable />
      <FloatingToolbar />
      <CellMenu />
      <ArrowLayer width="110" height="380" viewBox="190 470 110 380">
        <path d="M204.500 482l3-.5 71.500 330 5.500-1.500-2.500 27-11.500-23.500 5-1z" fill="#e01010" stroke="#c80808" />
      </ArrowLayer>
      <Pointer width="14" height="20" viewBox="0 0 14 20">
        <path d="M1 1v15l3.500-3.200 2.600 5.700 2.400-1.100-2.500-5.400H12z" fill="#fff" stroke="#000" />
      </Pointer>
      <Watermark>
        <svg width="44" height="44" viewBox="0 0 44 44">
          <path d="M43 3C24 1 2 13 1 27c0 4 2 7 7 9l5-1c-5-1-7-4-6-9C9 16 24 7 43 3z" fill="#5fa5dc" />
          <path
            d="M40 14c-10-2-20 1-26 7-5 5-6 11-1 13 5 1 12-3 15-9-3 4-9 6-11 4-2-3 2-8 7-10 5-2 11-1 11 3z"
            fill="#4f93cf"
          />
          <path d="M40 14c4 14-9 27-28 27 11-4 21-12 22-20 0-3-3-4-7-4 4-3 9-4 13-3z" fill="#74c476" />
          <path d="M12 41c9-3 17-8 20-14-2 8-9 14-20 14z" fill="#d4e26a" />
        </svg>
        <div>
          <strong>极光下载站</strong>
          <span>www.xz7.com</span>
        </div>
      </Watermark>
    </Window>
  );
}
